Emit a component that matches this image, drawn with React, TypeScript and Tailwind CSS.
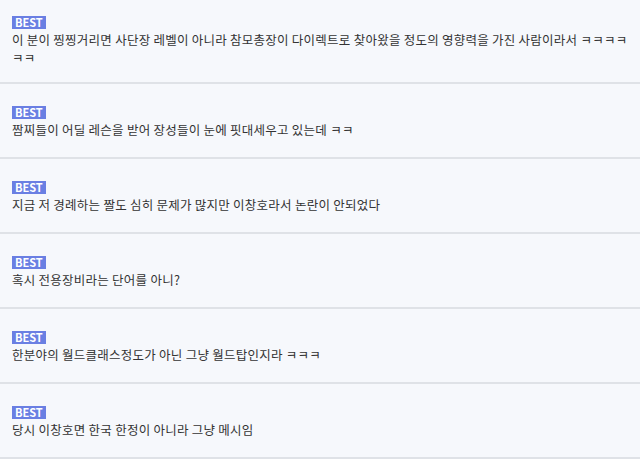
import React from 'react';

const comments: string[] = [
  '이 분이 찡찡거리면 사단장 레벨이 아니라 참모총장이 다이렉트로 찾아왔을 정도의 영향력을 가진 사람이라서 ㅋㅋㅋㅋㅋㅋ',
  '짬찌들이 어딜 레슨을 받어 장성들이 눈에 핏대세우고 있는데 ㅋㅋ',
  '지금 저 경례하는 짤도 심히 문제가 많지만 이창호라서 논란이 안되었다',
  '혹시 전용장비라는 단어를 아니?',
  '한분야의 월드클래스정도가 아닌 그냥 월드탑인지라 ㅋㅋㅋ',
  '당시 이창호면 한국 한정이 아니라 그냥 메시임',
];

const App: React.FC = () => {
  return (
    <div
      className="min-h-screen bg-[#f6f8fc] text-[#333333]"
      style={{ fontFamily: '"Noto Sans CJK KR", "Noto Sans", sans-serif' }}
    >
      {comments.map((text, i) => (
        <div
          key={i}
          className={`border-b-2 border-[#dfe2e7] px-3 ${i === 0 ? 'pt-4 pb-[15px]' : 'pt-[22px] pb-[18px]'}`}
        >
          <div className="h-[13px] w-fit bg-[#6a7fe3] px-[3px] text-[11px] font-bold leading-[13px] text-white">
            BEST
          </div>
          <p className="mt-[2px] text-[12.5px] leading-[18px] tracking-[0.25px]">{text}</p>
        </div>
      ))}
    </div>
  );
};

export default App;
